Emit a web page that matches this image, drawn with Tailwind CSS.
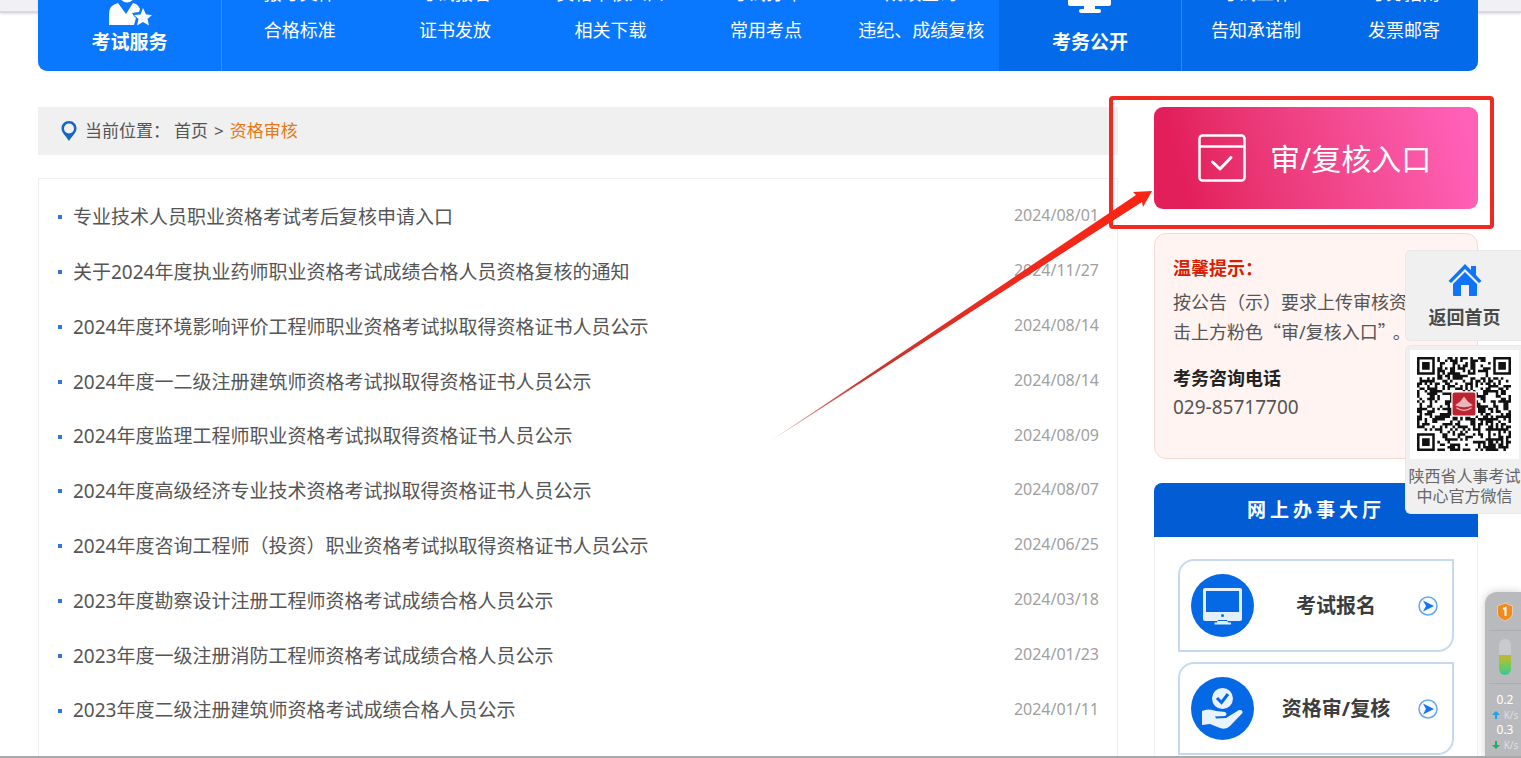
<!DOCTYPE html>
<html lang="zh-CN">
<head>
<meta charset="utf-8">
<meta name="viewport" content="width=device-width, initial-scale=1">
<title>资格审核</title>
<script src="https://cdn.jsdelivr.net/npm/@tailwindcss/browser@4"></script>
</head>
<body class="relative h-screen overflow-hidden bg-white font-['Noto_Sans','Noto_Sans_CJK_SC',sans-serif] text-[#555]">

<!-- page header strip behind the navigation -->
<header class="h-[13px] border-b-2 border-[#d9d9de] bg-[#f0f0f5] shadow-sm">
  <nav class="relative mr-[43px] ml-[38px] flex h-[71px] overflow-hidden rounded-b-[9px] text-white">
    <div class="flex w-[961px] shrink grow bg-[#0a77ff]">
      <a href="#" class="flex w-[184px] shrink-0 flex-col items-center border-r border-[#3b92ff] text-[19px] leading-7 font-bold">
        <svg class="h-7 w-11" viewBox="0 0 44 28" fill="currentColor" aria-hidden="true">
          <circle cx="19" cy="-5" r="7.500"/>
          <path d="M1 25V14Q1 5 10 3L18 14L25 3Q30 4 32 9L31 12L24 13Q26 17 28 18L26 25Z"/>
          <path d="M35 8L38 14.500L44 15L39.500 19L41 25.500L35 22L29 25.500L30.500 19L26 15L32.500 14.500Z"/>
        </svg>
        考试服务
      </a>
      <div class="mt-[-25px] grid grow grid-cols-5 content-start text-center text-[18px] leading-[37px] whitespace-nowrap">
        <a href="#">报考文件</a><a href="#">考试报名</a><a href="#">资格审核入口</a><a href="#">考试打印</a><a href="#">成绩查询</a>
        <a href="#">合格标准</a><a href="#">证书发放</a><a href="#">相关下载</a><a href="#">常用考点</a><a href="#">违纪、成绩复核</a>
      </div>
    </div>
    <div class="flex w-[479px] shrink grow-0 bg-[#036be9]">
      <a href="#" class="flex w-[183px] shrink-0 flex-col items-center border-r border-[#3487ed] text-[19px] leading-7 font-bold">
        <svg class="h-7 w-11" viewBox="0 0 44 28" fill="currentColor" aria-hidden="true">
          <path d="M0 -10H43V4Q43 6 41 6H2Q0 6 0 4ZM16 6H27V9H31Q33 9 33 11Q33 13 31 13H13Q11 13 11 11Q11 9 13 9H16Z"/>
        </svg>
        考务公开
      </a>
      <div class="mt-[-25px] grid grow grid-cols-2 content-start text-center text-[18px] leading-[37px] whitespace-nowrap">
        <a href="#">考试工作</a><a href="#">考务指南</a>
        <a href="#">告知承诺制</a><a href="#">发票邮寄</a>
      </div>
    </div>
  </nav>
</header>

<main class="mt-[94px] mr-[43px] ml-[38px] flex gap-9">
  <section class="min-w-0 grow">
    <div class="flex h-12 items-center bg-[#f0f0f0] pl-[23px] text-[17px]">
      <svg class="mr-2 h-5 w-4" viewBox="0 0 16 20" aria-hidden="true">
        <path fill="#1765c4" fill-rule="evenodd" d="M8 0C3.500 0 .5 3.300.5 7.500C.5 12 5 15 8 20C11 15 15.500 12 15.500 7.500C15.500 3.300 12.500 0 8 0ZM8 2.500A5 5 0 1 1 8 12.500A5 5 0 0 1 8 2.500Z"/>
      </svg>
      <span class="mr-1">当前位置：</span>
      <a href="#">首页</a><span class="mx-1.5">&gt;</span><a href="#" class="text-[#e67817]">资格审核</a>
    </div>
    <div class="mt-[23px] border border-[#efefef] pt-[11px] pr-[18px] pb-16 pl-[19px]">
      <ul class="grid h-[548px] grid-rows-10 text-[19px]">
        <li class="flex items-center"><i class="mr-[11px] size-1 bg-[#2f76dd]"></i><a href="#">专业技术人员职业资格考试考后复核申请入口</a><time class="ml-auto pb-1 text-base text-[#a0a0a0]">2024/08/01</time></li>
        <li class="flex items-center"><i class="mr-[11px] size-1 bg-[#2f76dd]"></i><a href="#">关于2024年度执业药师职业资格考试成绩合格人员资格复核的通知</a><time class="ml-auto pb-1 text-base text-[#a0a0a0]">2024/11/27</time></li>
        <li class="flex items-center"><i class="mr-[11px] size-1 bg-[#2f76dd]"></i><a href="#">2024年度环境影响评价工程师职业资格考试拟取得资格证书人员公示</a><time class="ml-auto pb-1 text-base text-[#a0a0a0]">2024/08/14</time></li>
        <li class="flex items-center"><i class="mr-[11px] size-1 bg-[#2f76dd]"></i><a href="#">2024年度一二级注册建筑师资格考试拟取得资格证书人员公示</a><time class="ml-auto pb-1 text-base text-[#a0a0a0]">2024/08/14</time></li>
        <li class="flex items-center"><i class="mr-[11px] size-1 bg-[#2f76dd]"></i><a href="#">2024年度监理工程师职业资格考试拟取得资格证书人员公示</a><time class="ml-auto pb-1 text-base text-[#a0a0a0]">2024/08/09</time></li>
        <li class="flex items-center"><i class="mr-[11px] size-1 bg-[#2f76dd]"></i><a href="#">2024年度高级经济专业技术资格考试拟取得资格证书人员公示</a><time class="ml-auto pb-1 text-base text-[#a0a0a0]">2024/08/07</time></li>
        <li class="flex items-center"><i class="mr-[11px] size-1 bg-[#2f76dd]"></i><a href="#">2024年度咨询工程师（投资）职业资格考试拟取得资格证书人员公示</a><time class="ml-auto pb-1 text-base text-[#a0a0a0]">2024/06/25</time></li>
        <li class="flex items-center"><i class="mr-[11px] size-1 bg-[#2f76dd]"></i><a href="#">2023年度勘察设计注册工程师资格考试成绩合格人员公示</a><time class="ml-auto pb-1 text-base text-[#a0a0a0]">2024/03/18</time></li>
        <li class="flex items-center"><i class="mr-[11px] size-1 bg-[#2f76dd]"></i><a href="#">2023年度一级注册消防工程师资格考试成绩合格人员公示</a><time class="ml-auto pb-1 text-base text-[#a0a0a0]">2024/01/23</time></li>
        <li class="flex items-center"><i class="mr-[11px] size-1 bg-[#2f76dd]"></i><a href="#">2023年度二级注册建筑师资格考试成绩合格人员公示</a><time class="ml-auto pb-1 text-base text-[#a0a0a0]">2024/01/11</time></li>
      </ul>
    </div>
  </section>

  <aside class="w-[324px] shrink-0">
    <a href="#" class="flex h-[102px] items-center rounded-[9px] bg-linear-75 from-[#e21e5b] from-10% to-[#ff60b8] to-95% pl-11 text-white">
      <svg class="mr-6 size-12" viewBox="0 0 48 48" fill="none" stroke="currentColor" stroke-width="2.500" aria-hidden="true">
        <rect x="1.500" y="1.500" width="45" height="45" rx="3"/><path d="M1.500 12.500H46.500"/><path stroke-width="3" stroke-linecap="round" stroke-linejoin="round" d="M14.500 28L22 35L33 23.500"/>
      </svg>
      <span class="text-[30px]">审/复核入口</span>
    </a>

    <div class="mt-6 h-[226px] rounded-xl border border-[#f5d9d2] bg-[#fff4f1] px-[18px] pt-5 text-[18px] leading-[29px] whitespace-nowrap">
      <h3 class="leading-7 font-bold text-[#d81e06]">温馨提示：</h3>
      <p class="mt-1.5">按公告（示）要求上传审核资料，<br>击上方粉色<span class="font-['Noto_Sans_CJK_SC']">“</span>审/复核入口<span class="mr-1.5 font-['Noto_Sans_CJK_SC']">”</span>。</p>
      <h3 class="mt-[17px] font-bold text-[#222]">考务咨询电话</h3>
      <p class="text-[19px]">029-85717700</p>
    </div>

    <h2 class="mt-6 flex h-[54px] items-center justify-center rounded-t-lg bg-[#025dd5] text-[19px] font-bold tracking-[4px] text-white">网上办事大厅</h2>
    <div class="flex flex-col gap-2.5 border border-t-0 border-[#f0f0f0] px-[23px] pt-[22px] pb-6 text-[20px] font-bold text-[#3c3c3c]">
      <a href="#" class="flex h-[93px] items-center rounded-tl-2xl rounded-br-2xl border-2 border-[#c5daf0] pr-3.5 pl-[11px]">
        <svg class="size-[63px]" viewBox="0 0 63 63" aria-hidden="true">
          <circle cx="31.500" cy="31.500" r="31.500" fill="#0568e5"/>
          <path fill="#e5f0ff" fill-rule="evenodd" d="M14 14H49Q51 14 51 16V45Q51 47 49 47H14Q12 47 12 45V16Q12 14 14 14ZM15 17V38H48V17ZM27 46H36L37 48.500H40V50.500H23.500V48.500H26Z"/>
          <circle cx="31.500" cy="41.500" r="1.500" fill="#0568e5"/>
        </svg>
        <span class="grow text-center">考试报名</span>
        <svg class="size-5" viewBox="0 0 20 20" aria-hidden="true"><circle cx="10" cy="10" r="9" fill="#f4f9ff" stroke="#69a5ef" stroke-width="1.500"/><path fill="#1873eb" d="M5 4.500L16 10L5 15.500L8 10Z"/></svg>
      </a>
      <a href="#" class="flex h-[93px] items-center rounded-tl-2xl rounded-br-2xl border-2 border-[#c5daf0] pr-3.5 pl-[11px]">
        <svg class="size-[63px]" viewBox="0 0 63 63" aria-hidden="true">
          <circle cx="31.500" cy="31.500" r="31.500" fill="#0568e5"/>
          <circle cx="31.500" cy="21.500" r="10.500" fill="#e9f2ff"/>
          <path fill="none" stroke="#0568e5" stroke-width="3" d="M26 21L30.500 25.500L37 17"/>
          <path fill="#e9f2ff" d="M11 34Q17 31 25 34L34 35Q37 37 34 39L24 39.500L25 41.500L35 41L48 33Q52 32.500 51.500 36L39 49Q35 53 29 51L19 47L11 48Z"/>
        </svg>
        <span class="grow text-center">资格审/复核</span>
        <svg class="size-5" viewBox="0 0 20 20" aria-hidden="true"><circle cx="10" cy="10" r="9" fill="#f4f9ff" stroke="#69a5ef" stroke-width="1.500"/><path fill="#1873eb" d="M5 4.500L16 10L5 15.500L8 10Z"/></svg>
      </a>
    </div>
  </aside>
</main>

<!-- floating shortcuts -->
<div class="absolute top-[250px] right-0 flex w-[116px] flex-col gap-1 text-center">
  <a href="#" class="flex h-[91px] flex-col items-center rounded-l-md border border-r-0 border-[#e8e8e8] bg-[#f0f0f0] pt-3 pl-0.5 text-[18px] font-bold text-[#4a4a4a]">
    <svg class="h-[34px] w-[34px]" viewBox="0 0 34 34" fill="#0f74fa" aria-hidden="true"><path d="M17 1L23 7V3H28V12L33.500 18L31 20L17 6L3 20L.5 18Z"/><path d="M17 9L29 21V32Q29 33 28 33H21V22H13V33H6Q5 33 5 32V21Z"/></svg>
    <span class="mt-1.5 leading-7">返回首页</span>
  </a>
  <div class="h-[169px] rounded-l-md border border-r-0 border-[#e8e8e8] bg-[#f0f0f0] pt-1 pl-0.5 text-[16px] leading-5 text-[#666]">
    <div class="ml-0.5 h-[109px] w-[109px] bg-white p-[7px]">
      <svg id="qr" class="h-[94px] w-[94px]" viewBox="0 0 37 37" role="img" aria-label="官方微信二维码"></svg>
    </div>
    <p class="mt-[7px] whitespace-nowrap">陕西省人事考试<br>中心官方微信</p>
  </div>
</div>

<!-- desktop monitor widget -->
<div class="absolute right-0 bottom-0 flex h-[166px] w-9 flex-col items-center rounded-tl-xl bg-[#b9babd] pt-2.5 pl-1 text-[12px] leading-4 text-white shadow-[0_0_8px_#0003]">
  <svg class="h-5 w-4" viewBox="0 0 16 20" aria-hidden="true"><path fill="#f38a1c" stroke="#d9cfc4" d="M8 1L15.500 4V12Q15 16 8 19Q1 16 .5 12V4Z"/><path fill="none" stroke="#fff" stroke-width="2" d="M6 7L8.500 6V14"/></svg>
  <div class="my-2 w-full border-t border-[#adaeb2]"></div>
  <div class="flex h-9 w-3 shrink-0 flex-col justify-end overflow-hidden rounded-full bg-[#c9cacd]"><div class="h-5 bg-linear-to-b from-[#c8b32c] via-[#78c952] to-[#25c993]"></div></div>
  <div class="my-2 w-full border-t border-[#adaeb2]"></div>
  <div>0.2</div>
  <div class="flex h-[14px] items-center gap-1 text-[10px] text-[#dedee0]"><svg class="size-2" viewBox="0 0 8 8" fill="#1da1e8" aria-hidden="true"><path d="M4 0L8 4H5V8H3V4H0Z"/></svg>K/s</div>
  <div>0.3</div>
  <div class="flex h-[14px] items-center gap-1 text-[10px] text-[#dedee0]"><svg class="size-2" viewBox="0 0 8 8" fill="#1fae63" aria-hidden="true"><path d="M4 8L0 4H3V0H5V4H8Z"/></svg>K/s</div>
</div>

<!-- annotation: frame and arrow pointing at the entry button -->
<svg class="pointer-events-none absolute top-24 right-[25px] h-[345px] w-[724px]" viewBox="-2 0 724 345" aria-hidden="true">
  <defs><linearGradient id="fade" x1="0" y1="1" x2="1" y2="0"><stop offset="0" stop-color="#d9a3a0"/><stop offset=".25" stop-color="#c9322c"/><stop offset=".6" stop-color="#ee2a1e"/><stop offset="1" stop-color="#fa2412"/></linearGradient></defs>
  <rect x="337" y="2" width="381" height="129" rx="2" fill="none" stroke="#ee2a22" stroke-width="4"/>
  <path fill="url(#fade)" d="M-2 344L362 99L359 96L378 95L369 111L368 106Z"/>
</svg>
<div class="absolute inset-x-0 bottom-0 h-0.5 bg-[#a9a9ab]"></div>

<script>
  // Paints a 37-module code: random data cells, three finder squares, one alignment square and the centre badge.
  let seed = 20240801, d = '';
  const cell = (x, y) => { d += `M${x} ${y}h1v1h-1z`; };
  const ring = (x, y, ox, oy, n) => {
    const a = x - ox, b = y - oy;
    if (a < 0 || b < 0 || a >= n || b >= n) return null;
    const k = Math.min(a, b, n - 1 - a, n - 1 - b);
    return k !== 1;
  };
  for (let y = 0; y < 37; y++) for (let x = 0; x < 37; x++) {
    seed = (seed * 1103515245 + 12345) % 2147483648;
    let on = seed / 2147483648 < 0.5;
    if ((x < 8 && (y < 8 || y > 28)) || (x > 28 && y < 8)) on = false;
    for (const [ox, oy, n] of [[0, 0, 7], [30, 0, 7], [0, 30, 7], [28, 28, 5]]) {
      const r = ring(x, y, ox, oy, n);
      if (r !== null) on = r;
    }
    if (on) cell(x, y);
  }
  document.getElementById('qr').innerHTML =
    `<path fill="#111" d="${d}"/><rect x="13.500" y="13.500" width="10" height="10" rx="1" fill="#fff"/><rect x="14" y="14" width="9" height="9" rx=".8" fill="#bd2230"/>
     <path fill="#e9b7ba" d="M18.500 15.500L20 17.500L22 19Q18.500 20.500 15 19L17 17.500Z"/><path fill="none" stroke="#e9b7ba" stroke-width=".5" d="M15.500 20Q18.500 22 21.500 20"/>`;
</script>
</body>
</html>
